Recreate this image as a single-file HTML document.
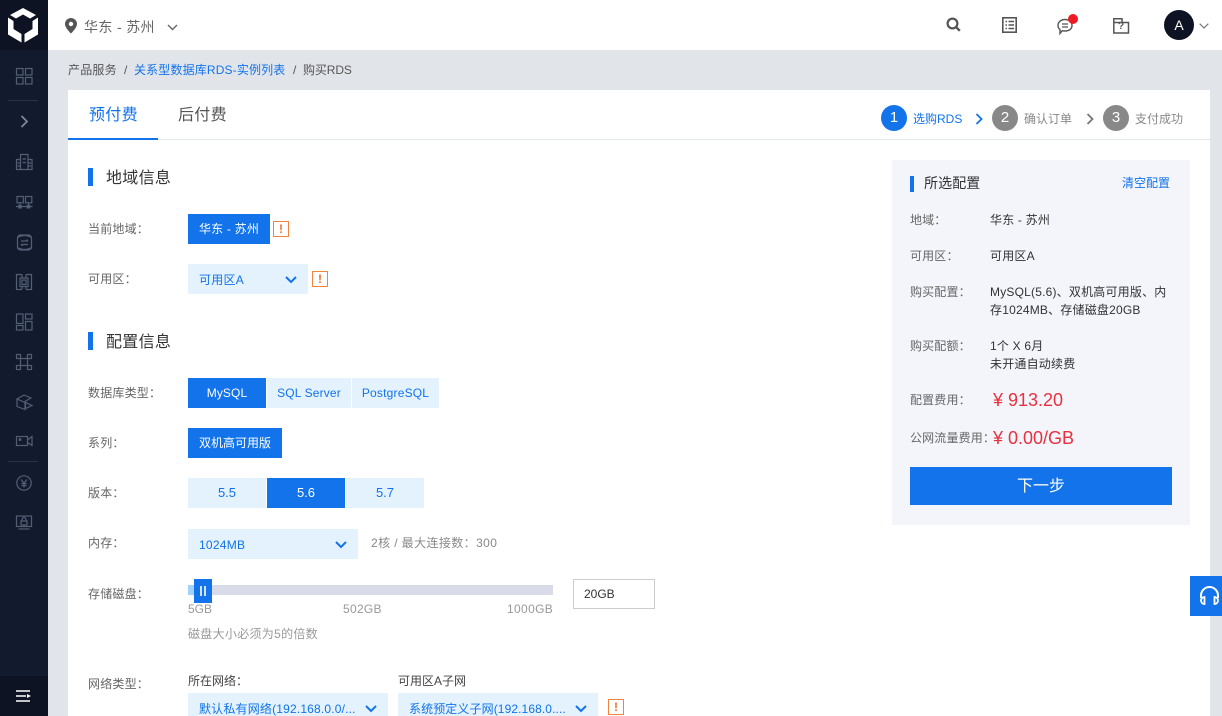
<!DOCTYPE html>
<html lang="zh">
<head>
<meta charset="utf-8">
<style>
html,body{margin:0;padding:0;width:1222px;height:716px;overflow:hidden}
#p{position:absolute;left:0;top:0;width:1222px;height:716px;overflow:hidden;background:#e1e5ea;font-family:"Liberation Sans","Noto Sans CJK SC",sans-serif;font-size:12px;color:#333}
.a,.t{position:absolute}
.t{white-space:nowrap;line-height:20px;height:20px}
.lab{color:#666;font-size:12px;left:88px;letter-spacing:.2px}
.btn{position:absolute;text-align:center;font-size:13px;height:30px;line-height:30px;background:#e3f2fd;color:#1273ea}
.on{background:#1273ea;color:#fff}
.sel{position:absolute;background:#e3f2fd;color:#1273ea;font-size:12px;height:30px;line-height:32px;padding-left:11px;box-sizing:border-box;white-space:nowrap;letter-spacing:.25px;overflow:hidden}
.warn{position:absolute;width:16px;height:16px;box-sizing:border-box;border:1px solid #f0843c;color:#f0702a;font-size:12px;line-height:14px;text-align:center;font-weight:bold}
.bar{position:absolute;left:88px;width:5px;height:18px;background:#1273ea}
.h{font-size:16px;color:#333;left:106px;line-height:24px;height:24px;letter-spacing:.3px}
.num{position:absolute;width:26px;height:26px;border-radius:50%;background:#888;color:#fff;font-size:15px;line-height:26px;text-align:center;top:105px}
.rl{left:910px;color:#666;font-size:12px;letter-spacing:.15px}
.rv{left:990px;color:#333;font-size:12px;letter-spacing:.2px}
.pr{font-size:18px;line-height:24px;height:24px;color:#e8303f}
svg{position:absolute;overflow:visible}
.ic{fill:none;stroke-width:1.2}
</style>
</head>
<body>
<div id="p">
<!-- sidebar -->
<div class="a" style="left:0;top:0;width:48px;height:716px;background:#121b2e"></div>
<div class="a" style="left:0;top:0;width:48px;height:50px;background:#0d1322"></div>
<div class="a" style="left:0;top:676px;width:48px;height:40px;background:#0d1322"></div>
<svg style="left:0;top:0" width="48" height="50"><path fill="#fff" d="M23 8 L36 15 L30 18.5 L23 14.5 L16 18.5 L10 15 Z M8 17.5 L13.5 21 V29 L21.5 34 V42.5 L8 34.5 Z M38 17.5 L32.5 21 V29 L24.5 34 V42.5 L38 34.5 Z"/></svg>
<div class="a" style="left:8px;top:100px;width:30px;height:1px;background:#263247"></div>
<div class="a" style="left:8px;top:461px;width:30px;height:1px;background:#263247"></div>
<svg class="ic" style="left:0;top:0" width="48" height="716">
<g stroke="#535e74">
<rect x="16.5" y="68.5" width="6.5" height="6.5"/><rect x="25.5" y="68.5" width="6.5" height="6.5"/><rect x="16.5" y="77.5" width="6.5" height="6.5"/><rect x="25.5" y="77.5" width="6.5" height="6.5"/>
<path d="M21.5 116 L27 121.5 L21.5 127" stroke="#7f8899" stroke-width="1.8"/>
<path d="M16.5 169.5 V159.5 H20.5 V154.5 H28 V159.5 H32 V169.5 Z M20.5 159.5 V169.5 M28 159.5 V169.5 M17.5 163 H20 M17.5 166 H20 M28.5 163 H31 M28.5 166 H31 M22.5 159 H26 M22.5 162.5 H26"/>
<rect x="17" y="196.5" width="6.3" height="6.3"/><rect x="25.5" y="196.5" width="6.3" height="6.3"/><path d="M16 206.5 H32.5 M20 202.5 V206.5 M28.5 202.5 V206.5"/><rect x="18.8" y="205.5" width="2.4" height="2.4" fill="#535e74"/><rect x="27.3" y="205.5" width="2.4" height="2.4" fill="#535e74"/>
<rect x="17.5" y="235" width="14" height="15" rx="3"/><path d="M17.5 237.5 Q24.5 233.5 31.5 237.5 M17.5 247.5 Q24.5 251.5 31.5 247.5 M21 241 H28 M26.5 239.5 L28 241 M21 244.5 H28 M22.5 246 L21 244.5"/>
<path d="M22 274.5 H16.5 V289.5 H22 M26 274.5 H31.5 V289.5 H26 M22 274.5 V278 M26 274.5 V278 M22 289.5 V286.5 M26 289.5 V286.5"/><rect x="20" y="278" width="8" height="8.5"/><rect x="22" y="280" width="4" height="4.5"/>
<rect x="16.5" y="314" width="6.5" height="9.5"/><rect x="25.5" y="314" width="6.5" height="5"/><rect x="16.5" y="325.5" width="6.5" height="4.5"/><rect x="25.5" y="321.5" width="6.5" height="8.5"/>
<path d="M20.5 358.5 H27.5 M20.5 365.5 H27.5 M20.5 358.5 V365.5 M27.5 358.5 V365.5"/><rect x="16.5" y="354.5" width="4" height="4"/><rect x="27.5" y="354.5" width="4" height="4"/><rect x="16.5" y="365.5" width="4" height="4"/><rect x="27.5" y="365.5" width="4" height="4"/>
<path d="M17 399 L24 395 L31 398 L24 402 Z M17 399 V406.5 L25 409.5 V402 M25.5 402.5 V408.5 L32 405.5 Z"/>
<rect x="16.5" y="436.5" width="11" height="9"/><path d="M27.5 440 L32 436.5 V445.5 L27.5 442.5"/><circle cx="20" cy="439.5" r=".9"/>
<circle cx="24" cy="483" r="7.2"/><path d="M21 479.5 L24 483 L27 479.5 M24 483 V487.5 M21.5 483.5 H26.5 M21.5 485.5 H26.5"/>
<rect x="16.5" y="516" width="15" height="10.5"/><path d="M18.5 529 H29.5"/><rect x="21" y="521" width="6" height="4"/><path d="M22 521 V519.5 A2 2 0 0 1 26 519.5 V521"/>
</g>
<path d="M16 691 H30 M16 696 H26 M16 701 H30" stroke="#fff" stroke-width="1.6"/><path d="M27 694 L31 696 L27 698 Z" fill="#fff" stroke="none"/>
</svg>
<!-- top bar -->
<div class="a" style="left:48px;top:0;width:1174px;height:50px;background:#fff"></div>
<svg style="left:65px;top:18px" width="13" height="16"><path fill-rule="evenodd" d="M6 0 A6 6 0 0 1 12 6 C12 10 6 15.5 6 15.5 C6 15.5 0 10 0 6 A6 6 0 0 1 6 0 Z M6 3.8 A2.2 2.2 0 1 0 6 8.2 A2.2 2.2 0 1 0 6 3.8 Z" fill="#555"/></svg>
<div class="t" style="left:84px;top:17px;font-size:14px;color:#666;letter-spacing:.35px">华东 - 苏州</div>
<svg style="left:167px;top:24px" width="11" height="7"><path d="M1 1 L5.5 5.5 L10 1" fill="none" stroke="#666" stroke-width="1.4"/></svg>
<svg style="left:946px;top:17px" width="15" height="15"><circle cx="6.5" cy="6.5" r="4.9" fill="none" stroke="#555" stroke-width="2.2"/><path d="M10.3 10.3 L13.8 13.8" stroke="#555" stroke-width="2.4"/></svg>
<svg style="left:1002px;top:17px" width="15" height="16"><rect x=".8" y=".8" width="13.4" height="14.4" fill="none" stroke="#555" stroke-width="1.6"/><path d="M3.5 4.5 H5 M3.5 8 H5 M3.5 11.5 H5 M6.5 4.5 H12 M6.5 8 H12 M6.5 11.5 H12" stroke="#555" stroke-width="1.4"/></svg>
<svg style="left:1057px;top:18px" width="16" height="17"><path d="M8 1.5 C12 1.5 15 4 15 7.5 C15 11 12 13 8 13 C7 13 6 13 5.2 12.7 L3 15.5 L3 11.5 C1.8 10.5 1 9 1 7.5 C1 4 4 1.5 8 1.5 Z" fill="none" stroke="#555" stroke-width="1.4"/><path d="M5 6 H11 M5 9 H11" stroke="#555" stroke-width="1.3"/></svg>
<div class="a" style="left:1068px;top:14px;width:10px;height:10px;border-radius:50%;background:#ed1c24"></div>
<svg style="left:1113px;top:18px" width="17" height="16"><path d="M.8 15 V.8 H9 V4.5 H15.5 V15 Z M.8 4.5 H9" fill="none" stroke="#555" stroke-width="1.5"/></svg>
<div class="t" style="left:1118px;top:17px;font-size:10px;font-weight:bold;color:#555;line-height:20px">?</div>
<div class="a" style="left:1164px;top:10px;width:30px;height:30px;border-radius:50%;background:#0d1322;color:#fff;font-size:14px;line-height:30px;text-align:center">A</div>
<svg style="left:1199px;top:23px" width="10" height="6"><path d="M.7 .7 L5 5 L9.3 .7" fill="none" stroke="#777" stroke-width="1.2"/></svg>
<!-- breadcrumb -->
<div class="t" style="left:68px;top:60px;color:#555;letter-spacing:.2px">产品服务</div>
<div class="t" style="left:124px;top:60px;color:#555">/</div>
<div class="t" style="left:134px;top:60px;color:#1273ea;letter-spacing:.15px">关系型数据库RDS-实例列表</div>
<div class="t" style="left:293px;top:60px;color:#555">/</div>
<div class="t" style="left:303px;top:60px;color:#555;letter-spacing:-.1px">购买RDS</div>
<!-- card -->
<div class="a" style="left:68px;top:90px;width:1142px;height:626px;background:#fff"></div>
<div class="a" style="left:68px;top:139px;width:1142px;height:1px;background:#e4e7ec"></div>
<div class="a" style="left:68px;top:138px;width:90px;height:2px;background:#1273ea"></div>
<div class="t" style="left:89px;top:104px;font-size:16px;line-height:24px;height:24px;color:#1273ea;letter-spacing:.3px">预付费</div>
<div class="t" style="left:178px;top:104px;font-size:16px;line-height:24px;height:24px;color:#555;letter-spacing:.3px">后付费</div>
<!-- steps -->
<div class="num" style="left:881px;background:#1273ea">1</div>
<div class="t" style="left:913px;top:109px;color:#1273ea">选购RDS</div>
<svg style="left:975px;top:113px" width="8" height="12"><path d="M1.5 1 L6.5 6 L1.5 11" fill="none" stroke="#1273ea" stroke-width="1.8"/></svg>
<div class="num" style="left:992px">2</div>
<div class="t" style="left:1024px;top:109px;color:#888">确认订单</div>
<svg style="left:1086px;top:113px" width="8" height="12"><path d="M1.5 1 L6.5 6 L1.5 11" fill="none" stroke="#777" stroke-width="1.8"/></svg>
<div class="num" style="left:1103px">3</div>
<div class="t" style="left:1135px;top:109px;color:#888">支付成功</div>
<!-- region -->
<div class="bar" style="top:168px"></div>
<div class="t h" style="top:165px;margin-top:2px">地域信息</div>
<div class="t lab" style="top:219px">当前地域：</div>
<div class="btn on" style="left:188px;top:214px;width:82px;font-size:12px;letter-spacing:.2px">华东 - 苏州</div>
<div class="warn" style="left:273px;top:221px">!</div>
<div class="t lab" style="top:269px">可用区：</div>
<div class="sel" style="left:188px;top:264px;width:120px">可用区A</div>
<svg style="left:285px;top:276px" width="12" height="8"><path d="M1 1 L6 6 L11 1" fill="none" stroke="#1273ea" stroke-width="2"/></svg>
<div class="warn" style="left:312px;top:271px">!</div>
<!-- config -->
<div class="bar" style="top:332px"></div>
<div class="t h" style="top:331px">配置信息</div>
<div class="t lab" style="top:383px">数据库类型：</div>
<div class="btn on" style="left:188px;top:378px;width:78px;font-size:12px;letter-spacing:.1px">MySQL</div>
<div class="btn" style="left:267px;top:378px;width:84px;font-size:12px;letter-spacing:.15px">SQL Server</div>
<div class="btn" style="left:352px;top:378px;width:87px;font-size:12px;letter-spacing:.2px">PostgreSQL</div>
<div class="t lab" style="top:433px">系列：</div>
<div class="btn on" style="left:188px;top:428px;width:94px;font-size:12px">双机高可用版</div>
<div class="t lab" style="top:483px">版本：</div>
<div class="btn" style="left:188px;top:478px;width:78px">5.5</div>
<div class="btn on" style="left:267px;top:478px;width:78px">5.6</div>
<div class="btn" style="left:346px;top:478px;width:78px">5.7</div>
<div class="t lab" style="top:533px">内存：</div>
<div class="sel" style="left:188px;top:529px;width:170px">1024MB</div>
<svg style="left:335px;top:541px" width="12" height="8"><path d="M1 1 L6 6 L11 1" fill="none" stroke="#1273ea" stroke-width="2"/></svg>
<div class="t" style="left:371px;top:533px;color:#888;letter-spacing:.4px">2核 / 最大连接数：300</div>
<!-- slider -->
<div class="t lab" style="top:584px">存储磁盘：</div>
<div class="a" style="left:188px;top:585px;width:365px;height:10px;background:#d9dce8"></div>
<div class="a" style="left:188px;top:585px;width:6px;height:10px;background:#a0d2fa"></div>
<div class="a" style="left:194px;top:579px;width:18px;height:24px;background:#1273ea"></div>
<div class="a" style="left:200px;top:586px;width:1.5px;height:10px;background:#cfe3fb"></div>
<div class="a" style="left:204px;top:586px;width:1.5px;height:10px;background:#cfe3fb"></div>
<div class="t" style="left:188px;top:599px;color:#999">5GB</div>
<div class="t" style="left:343px;top:599px;color:#999;letter-spacing:.3px">502GB</div>
<div class="t" style="left:507px;top:599px;color:#999;letter-spacing:.35px">1000GB</div>
<div class="a" style="left:573px;top:579px;width:82px;height:30px;box-sizing:border-box;border:1px solid #ccc;padding-left:10px;line-height:28px;font-size:12px;color:#333">20GB</div>
<div class="t" style="left:188px;top:624px;color:#999;letter-spacing:.3px">磁盘大小必须为5的倍数</div>
<!-- network -->
<div class="t lab" style="top:674px">网络类型：</div>
<div class="t" style="left:188px;top:671px;color:#444">所在网络：</div>
<div class="t" style="left:398px;top:671px;color:#444">可用区A子网</div>
<div class="sel" style="left:188px;top:693px;width:200px;letter-spacing:.18px">默认私有网络(192.168.0.0/...</div>
<svg style="left:365px;top:705px" width="12" height="8"><path d="M1 1 L6 6 L11 1" fill="none" stroke="#1273ea" stroke-width="2"/></svg>
<div class="sel" style="left:398px;top:693px;width:200px;letter-spacing:.1px">系统预定义子网(192.168.0....</div>
<svg style="left:575px;top:705px" width="12" height="8"><path d="M1 1 L6 6 L11 1" fill="none" stroke="#1273ea" stroke-width="2"/></svg>
<div class="warn" style="left:608px;top:699px">!</div>
<!-- right panel -->
<div class="a" style="left:892px;top:160px;width:298px;height:365px;background:#f3f5fb"></div>
<div class="a" style="left:910px;top:176px;width:4px;height:16px;background:#1273ea"></div>
<div class="t" style="left:924px;top:173px;font-size:14px;color:#333;letter-spacing:.1px">所选配置</div>
<div class="t" style="left:1122px;top:173px;color:#1273ea">清空配置</div>
<div class="t rl" style="top:210px">地域：</div><div class="t rv" style="top:210px">华东 - 苏州</div>
<div class="t rl" style="top:246px">可用区：</div><div class="t rv" style="top:246px">可用区A</div>
<div class="t rl" style="top:282px">购买配置：</div>
<div class="t rv" style="top:283px;line-height:18px;height:36px">MySQL(5.6)、双机高可用版、内<br>存1024MB、存储磁盘20GB</div>
<div class="t rl" style="top:336px">购买配额：</div>
<div class="t rv" style="top:337px;line-height:18px;height:36px">1个 X 6月<br>未开通自动续费</div>
<div class="t rl" style="top:390px">配置费用：</div>
<div class="t pr" style="left:993px;top:388px;font-family:'Liberation Sans',sans-serif">¥</div>
<div class="t pr" style="left:1008px;top:388px">913.20</div>
<div class="t rl" style="top:428px">公网流量费用：</div>
<div class="t pr" style="left:993px;top:426px;font-family:'Liberation Sans',sans-serif">¥</div>
<div class="t pr" style="left:1008px;top:426px">0.00/GB</div>
<div class="a" style="left:910px;top:467px;width:262px;height:38px;background:#1273ea;color:#fff;font-size:16px;line-height:40px;text-align:center">下一步</div>
<!-- float -->
<div class="a" style="left:1190px;top:576px;width:32px;height:40px;background:#1273ea"></div>
<svg style="left:1198px;top:586px" width="24" height="20"><path d="M3 12 V9.5 A8.5 8.5 0 0 1 20 9.5 V12" fill="none" stroke="#fff" stroke-width="2"/><path d="M6.5 11 A3.5 3.5 0 0 0 6.5 18 Z M16.5 11 A3.5 3.5 0 0 1 16.5 18 Z" fill="none" stroke="#fff" stroke-width="1.8"/></svg>
</div>
</body>
</html>
